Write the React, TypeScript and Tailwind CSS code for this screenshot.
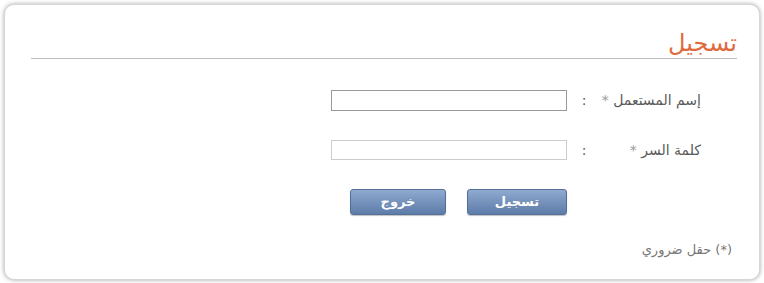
export default function App() {
  return (
    <div
      dir="rtl"
      className="h-[283px] w-[764px] bg-white p-1"
      style={{ fontFamily: '"DejaVu Sans", Tahoma, sans-serif' }}
    >
      <div className="h-[276px] w-[756px] rounded-[10px] border border-[#d6d6d6] bg-white pt-[25px] pr-[22px] pl-[26px] shadow-[0_0_4px_rgba(0,0,0,0.35)]">
        <h1 className="border-b border-[#bdbdbd] pb-[2px] text-[24px] leading-[26px] text-[#e06a3c]">
          تسجيل
        </h1>

        <form className="pt-[31px] pr-[36px]">
          <div className="flex h-[21px] items-center">
            <label className="w-[110px] text-[14px] text-[#5a5a5a]">
              إسم المستعمل <span className="text-[#999]">*</span>
            </label>
            <span className="w-[14px] text-center text-[14px] text-[#5a5a5a]">:</span>
            <input
              type="text"
              className="mr-[10px] h-[21px] w-[236px] border border-[#999] bg-white outline-none"
            />
          </div>

          <div className="mt-[29px] flex h-[20px] items-center">
            <label className="w-[110px] text-[14px] text-[#5a5a5a]">
              كلمة السر <span className="text-[#999]">*</span>
            </label>
            <span className="w-[14px] text-center text-[14px] text-[#5a5a5a]">:</span>
            <input
              type="password"
              className="mr-[10px] h-[20px] w-[236px] border border-[#ccc] bg-white outline-none"
            />
          </div>

          <div className="mt-[29px] flex gap-[21px] pr-[134px]">
            <button
              type="submit"
              className="h-[26px] w-[100px] rounded-[3px] border border-[#52709a] bg-gradient-to-b from-[#90aad0] to-[#5d7ca8] text-[13px] font-bold text-white shadow-[0_1px_1px_rgba(0,0,0,0.25)]"
            >
              تسجيل
            </button>
            <button
              type="button"
              className="h-[26px] w-[96px] rounded-[3px] border border-[#52709a] bg-gradient-to-b from-[#90aad0] to-[#5d7ca8] text-[13px] font-bold text-white shadow-[0_1px_1px_rgba(0,0,0,0.25)]"
            >
              خروج
            </button>
          </div>
        </form>

        <p className="mt-[25px] pr-[5px] text-[13px] text-[#777]">(*) حقل ضروري</p>
      </div>
    </div>
  )
}
